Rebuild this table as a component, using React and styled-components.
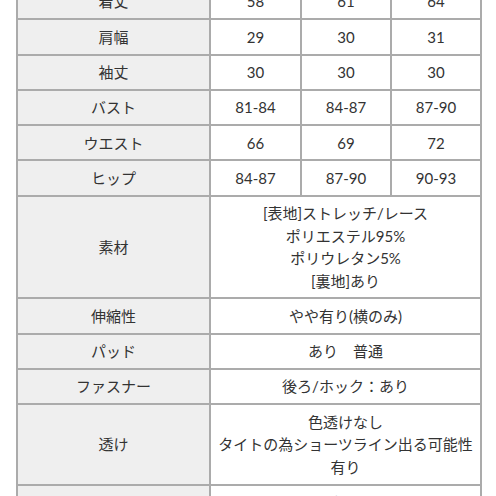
import React from "react";
import styled, { createGlobalStyle } from "styled-components";

const Global = createGlobalStyle`
  html, body { margin: 0; padding: 0; background: #fff; }
  body { overflow: hidden; }
`;

const Page = styled.div`
  padding: 0 16px;
  margin-top: -17px;
`;

const Table = styled.table`
  width: 464px;
  border-collapse: collapse;
  table-layout: fixed;
  font-family: Lato, "Noto Sans CJK JP", sans-serif;
  font-size: 15px;
  color: #333;
`;

const Col = styled.col`
  width: ${(p) => p.$w}px;
`;

const Cell = styled.td`
  border: 2px solid #ababab;
  padding: 5.4px 4px;
  line-height: 22.5px;
  text-align: center;
  vertical-align: middle;
  background: ${(p) => (p.$label ? "#efefef" : "#fff")};
  white-space: nowrap;
`;

const rows = [
  ["着丈", ["58", "61", "64"]],
  ["肩幅", ["29", "30", "31"]],
  ["袖丈", ["30", "30", "30"]],
  ["バスト", ["81-84", "84-87", "87-90"]],
  ["ウエスト", ["66", "69", "72"]],
  ["ヒップ", ["84-87", "87-90", "90-93"]],
  ["素材", "[表地]ストレッチ/レース\nポリエステル95%\nポリウレタン5%\n[裏地]あり"],
  ["伸縮性", "やや有り(横のみ)"],
  ["パッド", "あり　普通"],
  ["ファスナー", "後ろ/ホック：あり"],
  ["透け", "色透けなし\nタイトの為ショーツライン出る可能性\n有り"],
  ["ライナー", "なし"],
];

function Lines({ text }) {
  const parts = text.split("\n");
  return parts.map((t, i) => (
    <React.Fragment key={i}>
      {t}
      {i < parts.length - 1 && <br />}
    </React.Fragment>
  ));
}

export default function App() {
  return (
    <>
      <Global />
      <Page>
        <Table>
          <colgroup>
            <Col $w={193} />
            <Col $w={91} />
            <Col $w={90} />
            <Col $w={90} />
          </colgroup>
          <tbody>
            {rows.map(([label, val]) => (
              <tr key={label}>
                <Cell $label>{label}</Cell>
                {Array.isArray(val) ? (
                  val.map((v, i) => <Cell key={i}>{v}</Cell>)
                ) : (
                  <Cell colSpan={3}>
                    <Lines text={val} />
                  </Cell>
                )}
              </tr>
            ))}
          </tbody>
        </Table>
      </Page>
    </>
  );
}
